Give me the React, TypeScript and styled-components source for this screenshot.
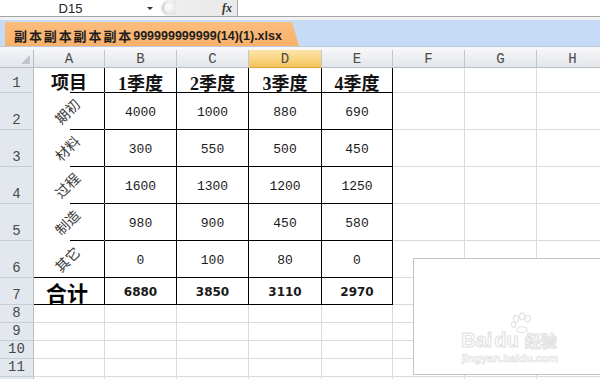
import React from 'react';
import styled, { createGlobalStyle, css } from 'styled-components';

const GlobalStyle = createGlobalStyle`
  html, body {
    margin: 0;
    padding: 0;
    background: #ffffff;
    overflow: hidden;
  }
  body {
    font-family: 'Liberation Sans', 'Noto Sans CJK SC', sans-serif;
  }
`;

// row header + A..H
const colWidths = [34, 71, 72, 72, 73, 71, 72, 72, 72];
const colLetters = ['A', 'B', 'C', 'D', 'E', 'F', 'G', 'H'];

type RowKind = 'head' | 'data' | 'total';

interface TableRow {
  height: number;
  label: string;
  values: string[];
  kind: RowKind;
}

const tableRows: TableRow[] = [
  { height: 25, label: '项目', values: ['1季度', '2季度', '3季度', '4季度'], kind: 'head' },
  { height: 37, label: '期初', values: ['4000', '1000', '880', '690'], kind: 'data' },
  { height: 37, label: '材料', values: ['300', '550', '500', '450'], kind: 'data' },
  { height: 37, label: '过程', values: ['1600', '1300', '1200', '1250'], kind: 'data' },
  { height: 37, label: '制造', values: ['980', '900', '450', '580'], kind: 'data' },
  { height: 37, label: '其它', values: ['0', '100', '80', '0'], kind: 'data' },
  { height: 27, label: '合计', values: ['6880', '3850', '3110', '2970'], kind: 'total' }
];

// the last row only peeks in under the window edge, so it has no number shown
const emptyRows = ['8', '9', '10', '11', ''];

const App = () => {
  const rowHeights = [18, ...tableRows.map((r) => r.height), 18, 18, 18, 18, 18];

  return (
    <Page>
      <GlobalStyle />
      <FormulaBar>
        <NameBox>
          <NameText>D15</NameText>
          <Caret />
        </NameBox>
        <FxArea>
          <Handle />
          <Fx>fx</Fx>
        </FxArea>
        <FormulaInput />
      </FormulaBar>
      <Gap />
      <TabStrip>
        <Tab>
          <TabCjk>副本副本副本副本</TabCjk>999999999999(14)(1).xlsx
        </Tab>
      </TabStrip>
      <Gap $white />
      <Sheet
        style={{
          gridTemplateColumns: colWidths.map((w) => `${w}px`).join(' '),
          gridTemplateRows: rowHeights.map((h) => `${h}px`).join(' ')
        }}
      >
        <Corner>
          <CornerMark />
        </Corner>
        {colLetters.map((c) => (
          <ColHead key={c} $active={c === 'D'}>
            {c}
          </ColHead>
        ))}

        {tableRows.map((row, i) => (
          <React.Fragment key={row.label}>
            <RowHead>{i + 1}</RowHead>
            <LabelCell $partial={i < 5}>
              {row.kind === 'head' && <HeadText>{row.label}</HeadText>}
              {row.kind === 'data' && <Slanted>{row.label}</Slanted>}
              {row.kind === 'total' && <TotalLabel>{row.label}</TotalLabel>}
            </LabelCell>
            {row.values.map((v, j) => (
              <TableCell key={j} $kind={row.kind}>
                {row.kind === 'head' ? <HeadText>{v}</HeadText> : v}
              </TableCell>
            ))}
            <Cell />
            <Cell />
            <Cell />
          </React.Fragment>
        ))}

        {emptyRows.map((n, i) => (
          <React.Fragment key={i}>
            <RowHead>{n}</RowHead>
            {colLetters.map((c) => (
              <Cell key={c} />
            ))}
          </React.Fragment>
        ))}
      </Sheet>

      <Watermark>
        <Paw viewBox="0 0 30 26">
          <ellipse cx="8" cy="8" rx="3" ry="4" />
          <ellipse cx="15" cy="5" rx="3" ry="4" />
          <ellipse cx="22" cy="8" rx="3" ry="4" />
          <ellipse cx="5" cy="15" rx="2.5" ry="3.2" />
          <path d="M9 22 C9 16 21 16 21 22 C21 25 9 25 9 22 Z" />
        </Paw>
        <MarkRow>
          <MarkLatin>Bai</MarkLatin>
          <MarkLatin>du</MarkLatin>
          <MarkCjk>经验</MarkCjk>
        </MarkRow>
        <MarkUrl>jingyan.baidu.com</MarkUrl>
      </Watermark>
    </Page>
  );
};

export default App;

const Page = styled.div`
  position: relative;
  width: 600px;
  height: 379px;
  overflow: hidden;
  background: #ffffff;
`;

const FormulaBar = styled.div`
  display: flex;
  height: 16px;
  border-bottom: 1px solid #a4a4a4;
  background: #ffffff;
`;

const NameBox = styled.div`
  display: flex;
  align-items: center;
  width: 158px;
`;

const NameText = styled.span`
  width: 141px;
  text-align: center;
  font-family: 'Liberation Sans', sans-serif;
  font-size: 13px;
  color: #222222;
`;

const Caret = styled.span`
  width: 0;
  height: 0;
  margin-left: 6px;
  border-left: 3px solid transparent;
  border-right: 3px solid transparent;
  border-top: 3px solid #333333;
`;

const FxArea = styled.div`
  display: flex;
  align-items: center;
  justify-content: space-between;
  width: 77px;
  margin-left: 2px;
  border-radius: 9px 0 0 9px;
  border-right: 1px solid #a8a8a8;
  background: linear-gradient(to right, #f4f4f4, #ececec 40%, #e9e9e9);
`;

const Handle = styled.span`
  width: 12px;
  height: 14px;
  margin-left: 2px;
  border-radius: 7px 0 0 7px;
  border-left: 2px solid #d2d2d2;
  background: radial-gradient(circle at 40% 40%, #ffffff, #e6e6e6 70%);
`;

const Fx = styled.span`
  margin-right: 5px;
  font-family: 'Liberation Serif', serif;
  font-style: italic;
  font-weight: bold;
  font-size: 12px;
  color: #333333;
`;

const FormulaInput = styled.div`
  flex: 1;
  background: #ffffff;
`;

const Gap = styled.div<{ $white?: boolean }>`
  height: 3px;
  background: ${(p) => (p.$white ? '#f7f7f7' : '#f2f2f2')};
`;

const TabStrip = styled.div`
  display: flex;
  align-items: flex-end;
  height: 27px;
  padding-left: 5px;
  background: #c6dbf6;
  border-bottom: 1px solid #b9c9e0;
  box-sizing: border-box;
`;

const Tab = styled.div`
  display: flex;
  align-items: center;
  height: 24px;
  width: 294px;
  padding: 3px 0 0 9px;
  box-sizing: border-box;
  background: linear-gradient(to bottom, #fbbd7e, #f9b169);
  clip-path: polygon(0 0, calc(100% - 7px) 0, 100% 100%, 0 100%);
  font-family: 'Liberation Sans', 'Noto Sans CJK SC', sans-serif;
  font-weight: bold;
  font-size: 12.5px;
  color: #1e1e1e;
  white-space: nowrap;
`;

const TabCjk = styled.span`
  font-family: 'Noto Sans CJK SC', sans-serif;
  font-size: 13px;
  letter-spacing: 1.9px;
`;

const Sheet = styled.div`
  display: grid;
  width: 600px;
  overflow: hidden;
`;

const headBase = css`
  display: flex;
  justify-content: center;
  box-sizing: border-box;
  font-family: 'Liberation Mono', monospace;
  font-size: 14px;
  color: #4a4a4a;
`;

const Corner = styled.div`
  position: relative;
  box-sizing: border-box;
  background: linear-gradient(to bottom, #f1f3f6, #e2e6eb);
  border-right: 1px solid #b8bec6;
  border-bottom: 1px solid #b8bec6;
`;

const CornerMark = styled.span`
  position: absolute;
  right: 3px;
  bottom: 3px;
  width: 0;
  height: 0;
  border-left: 9px solid transparent;
  border-bottom: 9px solid #c2c6cb;
`;

const ColHead = styled.div<{ $active?: boolean }>`
  ${headBase};
  align-items: center;
  background: ${(p) =>
    p.$active
      ? 'linear-gradient(to bottom, #fbe4a8, #f8d27c 60%, #f4c35a)'
      : 'linear-gradient(to bottom, #f4f5f7, #e3e6ea)'};
  border-right: 1px solid #c2c7cd;
  border-bottom: 1px solid ${(p) => (p.$active ? '#e3a33a' : '#b8bec6')};
`;

const RowHead = styled.div`
  ${headBase};
  align-items: flex-end;
  padding-bottom: 1px;
  background: #e3e8ee;
  border-right: 1px solid #b8bec6;
  border-bottom: 1px solid #c8ced6;
`;

const Cell = styled.div`
  box-sizing: border-box;
  background: #ffffff;
  border-right: 1px solid #dadada;
  border-bottom: 1px solid #dadada;
`;

const LabelCell = styled.div<{ $partial?: boolean }>`
  position: relative;
  display: flex;
  align-items: center;
  justify-content: center;
  box-sizing: border-box;
  background: #ffffff;
  border-right: 1px solid #000000;
  border-bottom: 1px solid ${(p) => (p.$partial ? 'transparent' : '#000000')};
  &::after {
    content: '';
    display: ${(p) => (p.$partial ? 'block' : 'none')};
    position: absolute;
    left: 36px;
    right: 0;
    bottom: -1px;
    height: 1px;
    background: #000000;
  }
`;

const TableCell = styled.div<{ $kind: RowKind }>`
  display: flex;
  align-items: center;
  justify-content: center;
  box-sizing: border-box;
  background: #ffffff;
  border-right: 1px solid #000000;
  border-bottom: 1px solid #000000;
  color: #1a1a1a;
  ${(p) =>
    p.$kind === 'total'
      ? css`
          font-family: 'DejaVu Sans', sans-serif;
          font-weight: bold;
          font-size: 12px;
          padding-top: 2px;
        `
      : css`
          font-family: 'Liberation Mono', monospace;
          font-size: 13px;
          padding-top: 3px;
        `}
`;

const HeadText = styled.span`
  font-family: 'Liberation Serif', 'Noto Sans CJK SC', serif;
  font-weight: bold;
  font-size: 18px;
  color: #111111;
  margin-top: 1px;
`;

const Slanted = styled.span`
  display: inline-block;
  transform: rotate(-45deg);
  margin: 0 0 0 -4px;
  font-family: 'Noto Sans CJK SC', sans-serif;
  font-size: 14px;
  color: #3a3a3a;
  white-space: nowrap;
`;

const TotalLabel = styled.span`
  font-family: 'Noto Sans CJK SC', sans-serif;
  font-weight: bold;
  font-size: 21px;
  color: #000000;
  margin: 2px 0 0 -4px;
`;

const Watermark = styled.div`
  position: absolute;
  left: 413px;
  top: 258px;
  width: 187px;
  height: 117px;
  box-sizing: border-box;
  border: 1px solid #c4c4c4;
  border-right: none;
  background: #ffffff;
  display: flex;
  flex-direction: column;
  align-items: center;
  padding-top: 55px;
`;

const Paw = styled.svg`
  position: absolute;
  left: 95px;
  top: 53px;
  width: 26px;
  height: 22px;
  fill: none;
  stroke: #e2e2e2;
  stroke-width: 1.3;
`;

const MarkRow = styled.div`
  display: flex;
  align-items: baseline;
  gap: 2px;
  margin-top: 14px;
  margin-left: 4px;
`;

const MarkLatin = styled.span`
  font-family: 'Liberation Sans', sans-serif;
  font-size: 20px;
  font-weight: bold;
  color: #ffffff;
  -webkit-text-stroke: 1px #e0e0e0;
`;

const MarkCjk = styled.span`
  margin-left: 4px;
  font-family: 'Noto Sans CJK SC', sans-serif;
  font-size: 16px;
  font-weight: bold;
  color: #ffffff;
  -webkit-text-stroke: 1px #e0e0e0;
`;

const MarkUrl = styled.span`
  margin-left: 6px;
  font-family: 'Liberation Sans', sans-serif;
  font-size: 11px;
  font-weight: bold;
  color: #ffffff;
  -webkit-text-stroke: 0.7px #e2e2e2;
`;
